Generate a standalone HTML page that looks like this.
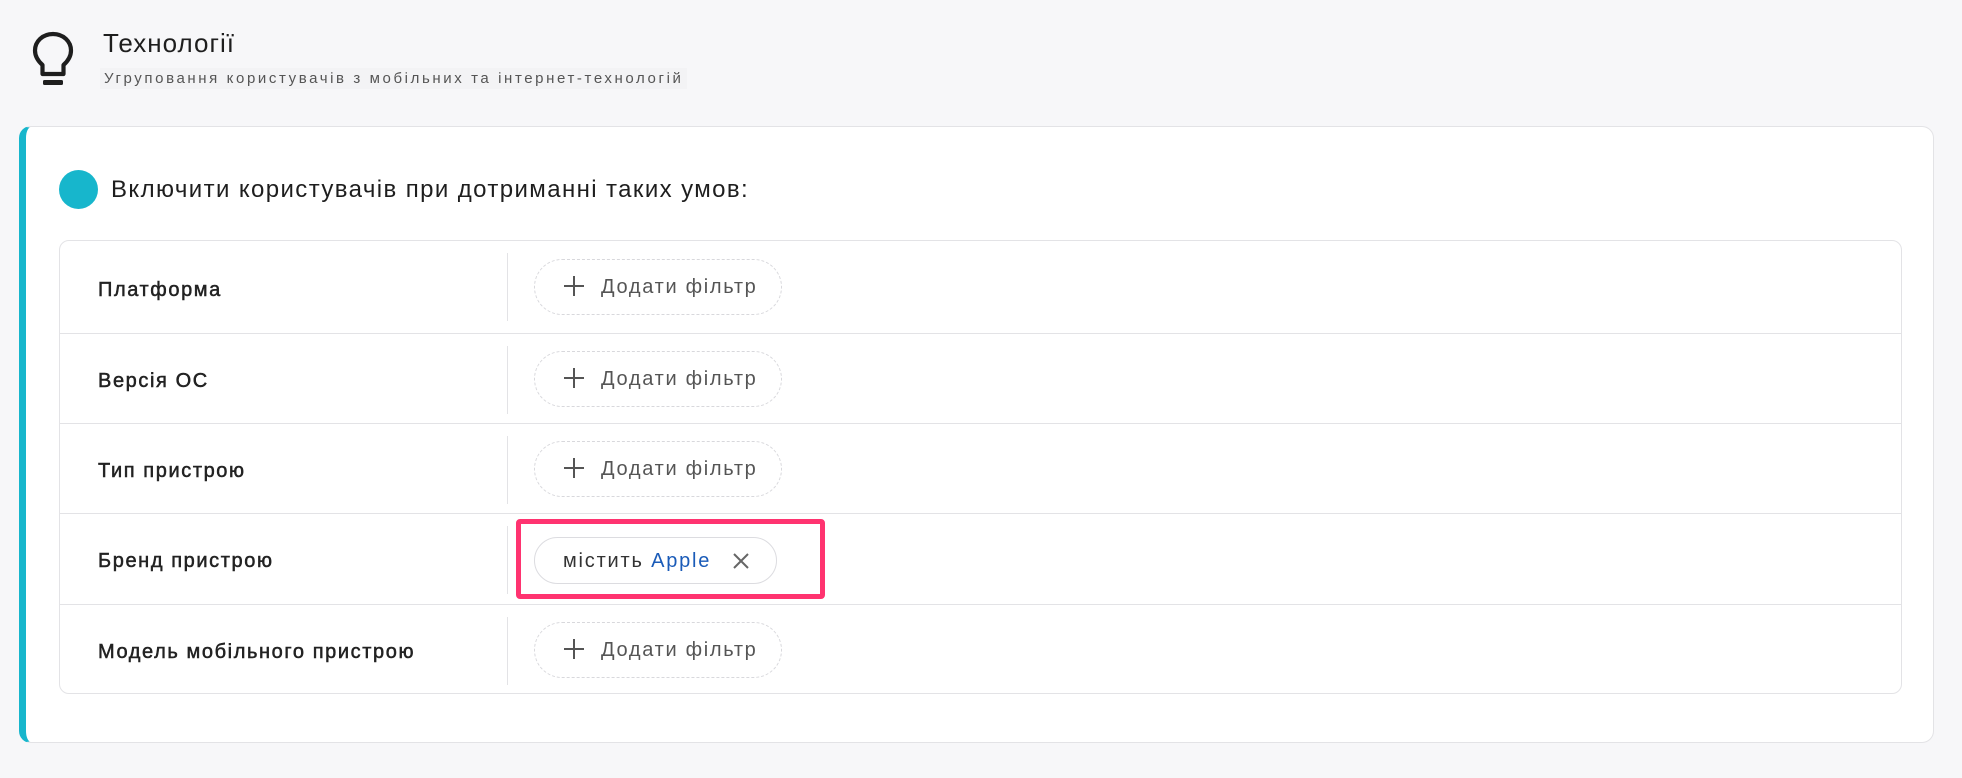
<!DOCTYPE html>
<html><head><meta charset="utf-8">
<style>
*{box-sizing:border-box;margin:0;padding:0}
body{width:1962px;height:778px;background:#f7f7f9;font-family:"Liberation Sans",sans-serif;position:relative;overflow:hidden;color:#222}
.abs{position:absolute}
.title{left:103px;top:28px;font-size:26px;color:#1e1e1e;letter-spacing:1px}
.sub{left:100px;top:68px;font-size:15px;letter-spacing:2.6px;color:#555;background:#f3f3f5;padding:2px 4px}
.card{left:19px;top:126px;width:1915px;height:617px;background:#fff;border:1px solid #e3e3e6;border-left:7px solid #17b6cc;border-radius:12px}
.dot{left:59px;top:170px;width:39px;height:39px;border-radius:50%;background:#17b6cc}
.head{left:111px;top:176px;font-size:24px;color:#1e1e1e;letter-spacing:1.4px}
.table{left:59px;top:240px;width:1843px;height:454px;border:1px solid #e3e3e6;border-radius:10px;background:#fff}
.row{position:absolute;left:0;width:100%;border-top:1px solid #e3e3e6}
.lbl{position:absolute;left:38px;font-size:20px;color:#222;letter-spacing:1.6px;-webkit-text-stroke:0.5px #222}
.vd{position:absolute;left:447px;width:1px;background:#e3e3e6}
.btn{position:absolute;left:474px;width:248px;height:56px;border:1px dashed #d8d8dc;border-radius:28px;font-size:20px;color:#555;letter-spacing:1.7px}
.btn span{position:absolute;left:66px;top:16px}
.btn svg{position:absolute;left:28px;top:15px}
</style></head><body>
<svg class="abs" style="left:30px;top:30px" width="46" height="58" viewBox="0 0 46 58">
<path d="M23 4C12.5 4 5 11.5 5 20.5c0 6.5 3.6 11 7.5 14.5V44h21v-9c3.9-3.5 7.5-8 7.5-14.5C41 11.5 33.5 4 23 4z" fill="none" stroke="#1e1e1e" stroke-width="4.2" stroke-linejoin="round"/>
<rect x="13" y="50" width="20" height="5" rx="1.5" fill="#1e1e1e"/>
</svg>
<div class="abs title">Технології</div>
<div class="abs sub">Угруповання користувачів з мобільних та інтернет-технологій</div>
<div class="abs card"></div>
<div class="abs dot"></div>
<div class="abs head">Включити користувачів при дотриманні таких умов:</div>
<div class="abs table">
  <div class="row" style="top:0;border-top:none;height:92px"><div class="lbl" style="top:38px">Платформа</div><div class="vd" style="top:12px;height:68px"></div>
    <div class="btn" style="top:18px"><svg width="22" height="22"><path d="M11 1v20M1 11h20" stroke="#555" stroke-width="2"/></svg><span>Додати фільтр</span></div></div>
  <div class="row" style="top:92px;height:91px"><div class="lbl" style="top:36px">Версія ОС</div><div class="vd" style="top:12px;height:68px"></div>
    <div class="btn" style="top:17px"><svg width="22" height="22"><path d="M11 1v20M1 11h20" stroke="#555" stroke-width="2"/></svg><span>Додати фільтр</span></div></div>
  <div class="row" style="top:182px;height:90px"><div class="lbl" style="top:36px">Тип пристрою</div><div class="vd" style="top:12px;height:68px"></div>
    <div class="btn" style="top:17px"><svg width="22" height="22"><path d="M11 1v20M1 11h20" stroke="#555" stroke-width="2"/></svg><span>Додати фільтр</span></div></div>
  <div class="row" style="top:272px;height:91px"><div class="lbl" style="top:36px">Бренд пристрою</div><div class="vd" style="top:12px;height:68px"></div>
    <div style="position:absolute;left:474px;top:23px;width:243px;height:47px;border:1px solid #dcdce0;border-radius:24px;font-size:20px;letter-spacing:1.8px">
      <span style="position:absolute;left:28px;top:12px;color:#333">містить <span style="color:#1a5bb8">Apple</span></span>
      <svg style="position:absolute;left:198px;top:15px" width="16" height="16"><path d="M1 1l14 14M15 1L1 15" stroke="#666" stroke-width="2"/></svg>
    </div></div>
  <div class="row" style="top:363px;height:90px"><div class="lbl" style="top:36px">Модель мобільного пристрою</div><div class="vd" style="top:12px;height:68px"></div>
    <div class="btn" style="top:17px"><svg width="22" height="22"><path d="M11 1v20M1 11h20" stroke="#555" stroke-width="2"/></svg><span>Додати фільтр</span></div></div>
</div>
<div class="abs" style="left:516px;top:519px;width:309px;height:80px;border:5px solid #ff3370;border-radius:4px"></div>
</body></html>
